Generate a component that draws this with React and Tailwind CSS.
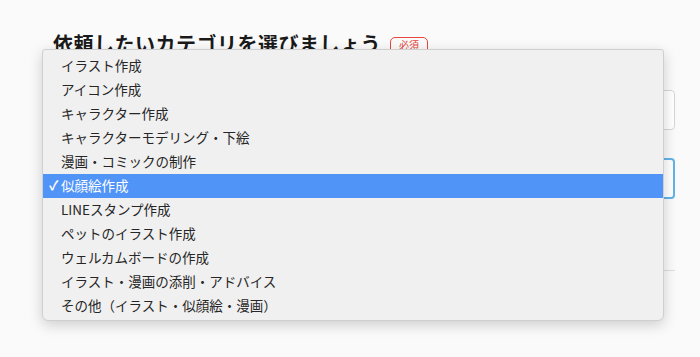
import React from 'react';

const items = [
    'イラスト作成',
    'アイコン作成',
    'キャラクター作成',
    'キャラクターモデリング・下絵',
    '漫画・コミックの制作',
    '似顔絵作成',
    'LINEスタンプ作成',
    'ペットのイラスト作成',
    'ウェルカムボードの作成',
    'イラスト・漫画の添削・アドバイス',
    'その他（イラスト・似顔絵・漫画）',
];

const selected = 5;

const App = () => {
    return (
        <div
            className="relative w-[700px] h-[357px] overflow-hidden bg-[#fafafa] text-[#222]"
            style={{ fontFamily: '"Noto Sans CJK JP", "Noto Sans", sans-serif' }}
        >
            {/* form behind the popup */}
            <div className="pl-[53px] pr-[25px] pt-[29px] flex flex-col">
                <div className="flex items-center gap-[9px] h-[30px]">
                    <h2 className="text-[20px] font-bold tracking-[0.5px] leading-none text-[#1a1a1a]">
                        依頼したいカテゴリを選びましょう
                    </h2>
                    <span className="mt-[2px] px-[8px] h-[17px] flex items-center rounded-[5px] border border-[#e8453c] text-[10px] text-[#e8453c] leading-none">
                        必須
                    </span>
                </div>
                <div className="mt-[31px] h-[40px] rounded-[4px] border border-[#d6d6d6] bg-white"></div>
                <div className="mt-[28px] h-[41px] rounded-[4px] border-2 border-[#62b3e8] bg-white"></div>
                <div className="mt-[71px] h-px bg-[#dedede]"></div>
            </div>

            {/* open select popup */}
            <div className="absolute left-[42px] top-[49px] w-[622px] h-[272px] py-[4px] bg-[#f0f0f0] border border-[#cfcfcf] rounded-b-[6px] rounded-t-[3px] shadow-[0_4px_14px_rgba(0,0,0,0.18)]">
                {items.map((label, i) => (
                    <div
                        key={label}
                        className={
                            i === selected
                                ? 'relative h-[24px] flex items-center pl-[18px] bg-[#5194f8] text-white text-[13.5px] leading-none'
                                : 'relative h-[24px] flex items-center pl-[18px] text-[#262626] text-[13.5px] leading-none'
                        }
                    >
                        {i === selected && (
                            <span className="absolute left-[6px] top-[4px] text-[13px] font-bold">✓</span>
                        )}
                        {label}
                    </div>
                ))}
            </div>
        </div>
    );
};

export default App;
